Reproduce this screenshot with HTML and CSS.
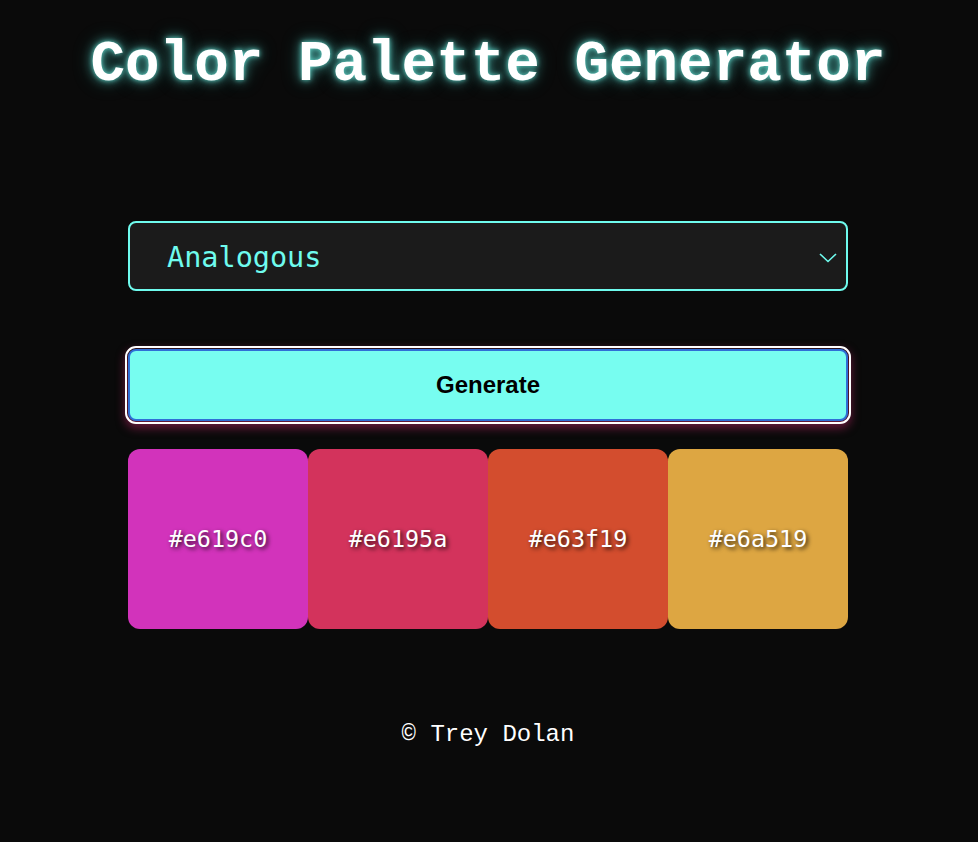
FILE: index.html
```html
<!DOCTYPE html>
<html>
<head>
<meta charset="utf-8">
<link rel="stylesheet" href="styles.css">
</head>
<body>
<main class="app">
  <h1 class="title">Color Palette Generator</h1>
  <div class="controls">
    <div class="select">
      <span class="select-value">Analogous</span>
      <svg class="chevron" width="20" height="12" viewBox="0 0 20 12"><path d="M2 3 L10 10.5 L18 3" fill="none" stroke="#6ffbee" stroke-width="1.6"/></svg>
    </div>
    <button class="generate">Generate</button>
    <div class="palette">
      <div class="swatch" style="background:#d233bb"><span>#e619c0</span></div>
      <div class="swatch" style="background:#d3335c"><span>#e6195a</span></div>
      <div class="swatch" style="background:#d34d2e"><span>#e63f19</span></div>
      <div class="swatch" style="background:#dda642"><span>#e6a519</span></div>
    </div>
  </div>
  <footer class="footer">© Trey Dolan</footer>
</main>
</body>
</html>
```
FILE: styles.css
```css
html, body {
  margin: 0;
  padding: 0;
  background: #0a0a0a;
}
.app {
  width: 720px;
  margin: 0 auto;
  padding-right: 2px;
  display: flex;
  flex-direction: column;
  align-items: stretch;
}
.title {
  margin: 31px -60px 0;
  text-align: center;
  font-family: "Liberation Mono", "Courier New", monospace;
  font-weight: bold;
  font-size: 57.6px;
  line-height: 68px;
  color: #ffffff;
  text-shadow: 0 0 5px rgba(120, 255, 240, 0.75), 0 0 12px rgba(90, 220, 210, 0.65), 0 0 20px rgba(70, 200, 190, 0.35);
}
.controls {
  margin-top: 122px;
  display: flex;
  flex-direction: column;
}
.select {
  box-sizing: border-box;
  height: 70px;
  border: 2px solid #6ffbee;
  border-radius: 8px;
  background: #1b1b1b;
  display: flex;
  align-items: center;
  justify-content: space-between;
  padding: 0 8px 0 37px;
}
.select-value {
  font-family: "DejaVu Sans Mono", monospace;
  font-size: 28.5px;
  color: #6ffbee;
  padding-top: 2px;
}
.chevron {
  margin-top: 2px;
}
.generate {
  margin-top: 58px;
  box-sizing: border-box;
  height: 72px;
  border: 2px solid #2f6fd6;
  border-radius: 8px;
  background: #77fdf0;
  outline: 2px solid #ffffff;
  outline-offset: 1px;
  box-shadow: 0 4px 10px 3px rgba(200, 40, 110, 0.5);
  font-family: "Liberation Sans", Arial, sans-serif;
  font-weight: bold;
  font-size: 24px;
  color: #000;
  padding: 0;
}
.palette {
  margin-top: 28px;
  display: grid;
  grid-template-columns: repeat(4, 180px);
}
.swatch {
  height: 180px;
  border-radius: 12px;
  display: flex;
  align-items: center;
  justify-content: center;
}
.swatch span {
  font-family: "DejaVu Sans Mono", monospace;
  font-size: 23.4px;
  color: #fff;
  text-shadow: 2px 2px 4px rgba(0, 0, 0, 0.8);
}
.footer {
  margin-top: 92px;
  text-align: center;
  font-family: "Liberation Mono", "Courier New", monospace;
  font-size: 24px;
  color: #ffffff;
}
```
